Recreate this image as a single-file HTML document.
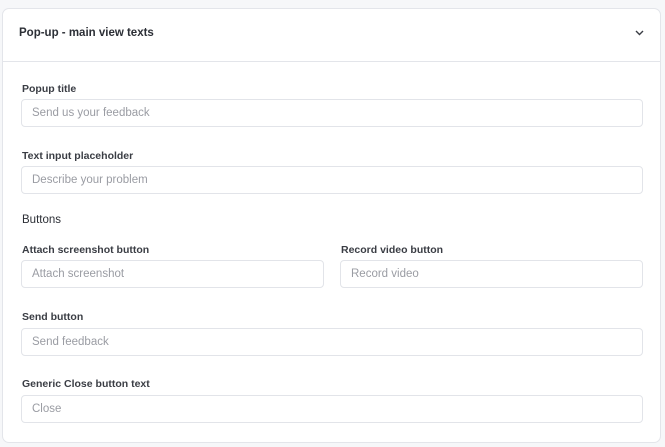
<!DOCTYPE html>
<html><head><style>
body{margin:0;width:665px;height:447px;background:#f6f7f9;font-family:"Liberation Sans",sans-serif;position:relative;overflow:hidden}
.card{position:absolute;left:2px;top:8px;width:659px;height:435px;background:#fff;border:1px solid #e3e5ea;border-radius:7px;box-sizing:border-box}
.hd{position:absolute;left:0;top:0;right:0;height:52px;border-bottom:1px solid #e3e5ea}
.t{position:absolute;font-size:11.5px;color:#2c2f36;font-weight:bold}
.l{position:absolute;font-size:10.5px;color:#3a3d44;font-weight:bold}
.i{position:absolute;height:28px;border:1px solid #e2e4e9;border-radius:4px;box-sizing:border-box;font-size:11.5px;color:#9a9ca3;line-height:27px;padding-left:10px;background:#fff}
</style></head><body>
<div class="card"><div class="hd"></div></div>
<div class="t" style="left:19px;top:27px">Pop-up - main view texts</div>
<svg style="position:absolute;left:635px;top:30px" width="9" height="6" viewBox="0 0 9 6"><path d="M1 1L4.5 4.5L8 1" stroke="#3a3d44" stroke-width="1.4" fill="none"/></svg>
<div class="l" style="left:22px;top:83px">Popup title</div>
<div class="i" style="left:21px;top:99px;width:622px">Send us your feedback</div>
<div class="l" style="left:22px;top:150px">Text input placeholder</div>
<div class="i" style="left:21px;top:166px;width:622px">Describe your problem</div>
<div class="t" style="left:22px;top:214px;font-weight:normal;font-size:11.5px">Buttons</div>
<div class="l" style="left:22px;top:244px">Attach screenshot button</div>
<div class="l" style="left:341px;top:244px">Record video button</div>
<div class="i" style="left:21px;top:260px;width:303px">Attach screenshot</div>
<div class="i" style="left:340px;top:260px;width:303px">Record video</div>
<div class="l" style="left:22px;top:311px">Send button</div>
<div class="i" style="left:21px;top:328px;width:622px">Send feedback</div>
<div class="l" style="left:22px;top:378px">Generic Close button text</div>
<div class="i" style="left:21px;top:395px;width:622px">Close</div>
</body></html>
